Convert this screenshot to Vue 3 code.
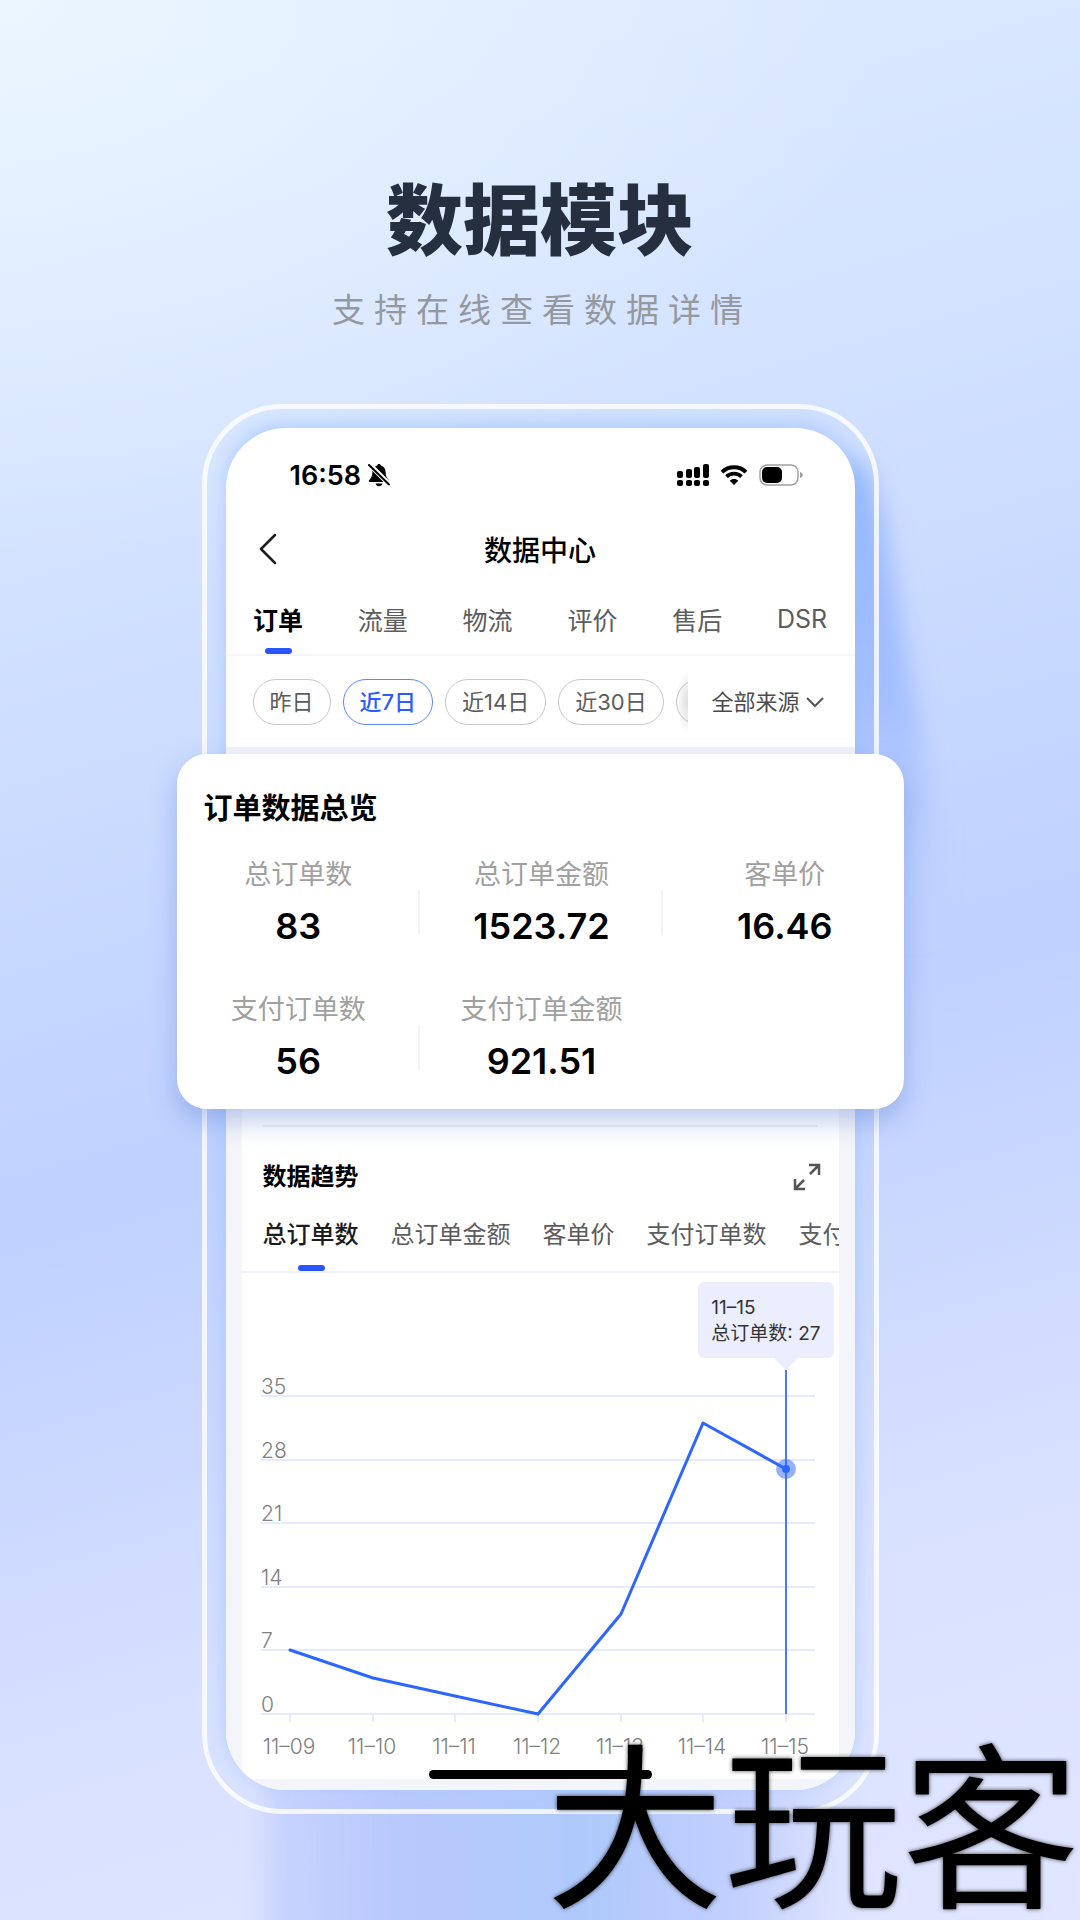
<script setup>
import { ref, computed } from 'vue'

const mainTabs = ['订单', '流量', '物流', '评价', '售后', 'DSR']
const mainTab = ref('订单')

const ranges = ['昨日', '近7日', '近14日', '近30日', '']
const range = ref('近7日')

const sources = ['全部来源']
const source = ref('全部来源')

const stats = [
  { label: '总订单数', value: '83', divider: true },
  { label: '总订单金额', value: '1523.72', divider: true },
  { label: '客单价', value: '16.46', divider: false },
  { label: '支付订单数', value: '56', divider: true },
  { label: '支付订单金额', value: '921.51', divider: false },
]

const trendTabs = ['总订单数', '总订单金额', '客单价', '支付订单数', '支付订单金额']
const trendTab = ref('总订单数')

const series = [
  { date: '11–09', value: 7 },
  { date: '11–10', value: 4 },
  { date: '11–11', value: 2 },
  { date: '11–12', value: 0 },
  { date: '11–13', value: 11 },
  { date: '11–14', value: 32 },
  { date: '11–15', value: 27 },
]
const ticks = [35, 28, 21, 14, 7, 0]
const plot = { left: 48, right: 544, top: 123, bottom: 441, max: 35 }

const yOf = (v) => Math.round(plot.bottom - (v / plot.max) * (plot.bottom - plot.top))
const points = computed(() =>
  series.map((d, i) => ({
    ...d,
    x: Math.round(plot.left + (i * (plot.right - plot.left)) / (series.length - 1)),
    y: yOf(d.value),
  })),
)
const linePoints = computed(() => points.value.map((p) => `${p.x},${p.y}`).join(' '))
const active = computed(() => points.value[points.value.length - 1])
</script>

<template>
  <main class="stage">
    <header class="hero">
      <h1>数据模块</h1>
      <p>支持在线查看数据详情</p>
    </header>

    <div class="device-wrap">
      <svg class="cast" viewBox="0 0 900 1560" preserveAspectRatio="none" aria-hidden="true">
        <defs>
          <linearGradient id="castSide" x1="0" y1="0" x2="0" y2="1">
            <stop offset="0" stop-color="#8fb2ff" stop-opacity=".9" />
            <stop offset=".5" stop-color="#9cb9ff" stop-opacity=".8" />
            <stop offset="1" stop-color="#b4c8ff" stop-opacity="0" />
          </linearGradient>
          <linearGradient id="castFoot" x1="0" y1="0" x2="1" y2="0">
            <stop offset="0" stop-color="#bccafd" stop-opacity=".6" />
            <stop offset=".2" stop-color="#b9c9fd" />
            <stop offset=".55" stop-color="#afc9fc" />
            <stop offset=".8" stop-color="#bccbfe" stop-opacity=".8" />
            <stop offset="1" stop-color="#ccd7fe" stop-opacity="0" />
          </linearGradient>
          <filter id="castBlur" x="-20%" y="-20%" width="140%" height="140%">
            <feGaussianBlur stdDeviation="12" />
          </filter>
        </defs>
        <polygon points="560,60 664,60 680,110 736,430 736,540 560,540" fill="url(#castSide)" filter="url(#castBlur)" />
        <rect x="64" y="1370" width="600" height="240" fill="url(#castFoot)" filter="url(#castBlur)" />
      </svg>

      <section class="device">
        <div class="screen">
          <div class="status">
            <span class="clock">16:58</span>
            <svg class="bell" width="22" height="24" viewBox="0 0 22 24" aria-hidden="true">
              <path d="M11 1c-1 0-1.700.7-1.800 1.500C6.200 3.300 4.500 5.800 4.400 9c-.1 4.200-1.200 6-3.300 8.200-.7.800-.2 1.800.8 1.800h18.200c1 0 1.500-1 .8-1.800-2.100-2.200-3.200-4-3.300-8.200-.1-3.200-1.800-5.700-4.800-6.500C12.700 1.700 12 1 11 1z" />
              <path d="M7.600 20.500h6.800c-.3 1.700-1.700 2.700-3.400 2.700s-3.100-1-3.400-2.700z" />
              <path d="M1 1l20 20" stroke="#fff" stroke-width="5" />
              <path d="M1 2l20 19.500" stroke="#000" stroke-width="2" stroke-linecap="round" />
            </svg>
            <span class="spacer"></span>
            <svg width="32" height="24" viewBox="0 0 32 24" aria-hidden="true">
              <rect x="0" y="8" width="6" height="7" rx="2" />
              <rect x="9" y="6" width="6" height="9" rx="2" />
              <rect x="17" y="4" width="6" height="11" rx="2" />
              <rect x="26" y="1" width="6" height="14" rx="2" />
              <rect x="0" y="17" width="6" height="6" rx="2" />
              <rect x="9" y="17" width="6" height="6" rx="2" />
              <rect x="17" y="17" width="6" height="6" rx="2" />
              <rect x="26" y="17" width="6" height="6" rx="2" />
            </svg>
            <svg class="wifi" width="28" height="20" viewBox="0 0 28 20" aria-hidden="true">
              <path d="M2 7.200C8.500.7 19.500.7 26 7.200" fill="none" stroke="#000" stroke-width="4" />
              <path d="M6.500 11.600c4-4 11-4 15 0" fill="none" stroke="#000" stroke-width="3.800" />
              <path d="M14 20l-4.300-4.300c2.400-2.200 6.200-2.200 8.600 0z" />
            </svg>
            <svg class="battery" width="44" height="22" viewBox="0 0 44 22" aria-hidden="true">
              <rect x="1" y="1" width="38" height="20" rx="7" fill="#fff" stroke="#a0a0a0" stroke-width="1.500" />
              <rect x="3" y="3" width="20" height="16" rx="5" />
              <path d="M41 8c2 .4 2.700 1.700 2.700 3s-.7 2.600-2.700 3z" fill="#a0a0a0" />
            </svg>
          </div>

          <div class="titlebar">
            <button class="back" type="button" aria-label="返回">
              <svg width="20" height="32" viewBox="0 0 20 32" aria-hidden="true">
                <path d="M17 2L3 16l14 14" fill="none" stroke="#1c1c1e" stroke-width="2.500" stroke-linecap="round" stroke-linejoin="round" />
              </svg>
            </button>
            <h2>数据中心</h2>
          </div>

          <nav class="main-tabs">
            <button
              v-for="t in mainTabs"
              :key="t"
              type="button"
              :class="{ on: t === mainTab }"
              @click="mainTab = t"
            >{{ t }}</button>
          </nav>

          <div class="filters">
            <div class="chips">
              <button
                v-for="r in ranges"
                :key="r"
                type="button"
                :class="{ on: r === range }"
                @click="range = r"
              >{{ r }}</button>
            </div>
            <label class="source">
              <select v-model="source" aria-label="来源">
                <option v-for="s in sources" :key="s">{{ s }}</option>
              </select>
              <svg width="18" height="12" viewBox="0 0 18 12" aria-hidden="true">
                <path d="M1 2l8 8 8-8" fill="none" stroke="#555" stroke-width="2" />
              </svg>
            </label>
          </div>

          <section class="overview">
            <h3>订单数据总览</h3>
            <dl>
              <div v-for="s in stats" :key="s.label" :class="{ divided: s.divider }">
                <dt>{{ s.label }}</dt>
                <dd>{{ s.value }}</dd>
              </div>
            </dl>
          </section>

          <div class="lower">
            <section class="trend">
              <hr />
              <div class="trend-head">
                <h3>数据趋势</h3>
                <button type="button" aria-label="全屏">
                  <svg width="28" height="28" viewBox="0 0 28 28" fill="none" stroke="#555" stroke-width="2.500" aria-hidden="true">
                    <path d="M16 2h10v10M26 2l-9 9" />
                    <path d="M2 16v10h10M2 26l9-9" />
                  </svg>
                </button>
              </div>
              <nav class="trend-tabs">
                <button
                  v-for="t in trendTabs"
                  :key="t"
                  type="button"
                  :class="{ on: t === trendTab }"
                  @click="trendTab = t"
                >{{ t }}</button>
              </nav>
              <figure class="chart">
                <svg viewBox="0 0 597 497" role="img" aria-label="总订单数趋势">
                  <g v-for="t in ticks" :key="t">
                    <line class="grid" x1="19" x2="573" :y1="yOf(t)" :y2="yOf(t)" />
                    <text class="axis" x="19" :y="yOf(t) - 2">{{ t }}</text>
                  </g>
                  <g v-for="p in points" :key="p.date">
                    <line class="grid" :x1="p.x" :x2="p.x" y1="441" y2="449" />
                    <text class="axis" :x="p.x - 1" y="481" text-anchor="middle">{{ p.date }}</text>
                  </g>
                  <line class="cursor" :x1="active.x" :x2="active.x" y1="97" y2="441" />
                  <polyline class="line" :points="linePoints" />
                  <circle class="halo" :cx="active.x" :cy="active.y" r="10" />
                  <circle class="dot" :cx="active.x" :cy="active.y" r="4" />
                </svg>
                <figcaption class="tip">
                  <span>{{ active.date }}</span>
                  <span>{{ trendTab }}: {{ active.value }}</span>
                </figcaption>
              </figure>
              <div class="home-bar"></div>
            </section>
          </div>
        </div>
      </section>
    </div>

    <div class="watermark">大玩客</div>
  </main>
</template>

<style>
body {
  margin: 0;
}
</style>

<style scoped>
* {
  box-sizing: border-box;
}

.stage {
  position: relative;
  overflow: hidden;
  min-height: 100vh;
  padding: 169px 0 107px;
  font-family: Inter, "Noto Sans CJK SC", sans-serif;
  color: #000;
  background:
    radial-gradient(ellipse 900px 560px at 0 0, rgba(240, 249, 255, 0.75), rgba(240, 249, 255, 0) 100%),
    linear-gradient(164deg, #dfecff 0%, #d5e4ff 22%, #cbdbff 38%, #bed1ff 55%, #cbd8ff 67%, #dae2ff 82%, #e1e6ff 100%);
}

h1,
h2,
h3,
p,
dl,
dd,
figure {
  margin: 0;
}

button {
  padding: 0;
  border: 0;
  background: none;
  font: inherit;
  color: inherit;
  white-space: nowrap;
}

svg {
  display: block;
}

.hero {
  text-align: center;
}

.hero h1 {
  font-size: 77px;
  line-height: 104px;
  font-weight: 900;
  color: #262f40;
}

.hero p {
  margin: 13px 0 0 4px;
  font-size: 33px;
  line-height: 48px;
  letter-spacing: 9px;
  color: #95989f;
}

.device-wrap {
  position: relative;
  width: 100%;
  max-width: 677px;
  margin: 70px auto 0;
}

.cast {
  position: absolute;
  top: 0;
  left: 0;
  width: 900px;
  height: 1560px;
}

.device {
  position: relative;
  padding: 19px;
  border: 5px solid rgba(255, 255, 255, 0.8);
  border-radius: 80px;
}

.screen {
  border-radius: 60px;
  background: #fff;
  box-shadow: 0 -4px 18px rgba(150, 190, 255, 0.6);
}

.status {
  display: flex;
  align-items: center;
  height: 94px;
  padding: 0 52px 0 64px;
}

.clock {
  font-size: 27px;
  font-weight: 600;
}

.bell {
  margin-left: 7px;
}

.spacer {
  flex: 1;
}

.wifi {
  margin: 0 11px;
}

.titlebar {
  position: relative;
  display: flex;
  align-items: center;
  justify-content: center;
  height: 54px;
}

.titlebar h2 {
  font-size: 28px;
  font-weight: 500;
}

.back {
  position: absolute;
  left: 32px;
}

.main-tabs {
  display: flex;
  height: 80px;
  border-bottom: 2px solid #f6f6f8;
}

.main-tabs button {
  position: relative;
  flex: 1;
  padding-bottom: 8px;
  padding-top: 16px;
  font-size: 25px;
  color: #5c5c5c;
}

.main-tabs button.on {
  font-weight: 600;
  color: #000;
}

.main-tabs button.on::after,
.trend-tabs button.on::after {
  content: "";
  position: absolute;
  left: calc(50% - 13px);
  bottom: 0;
  width: 27px;
  height: 6px;
  border-radius: 3px;
  background: #2b54ff;
}

.filters {
  display: flex;
  height: 98px;
  border-bottom: 7px solid #f3f4fa;
}

.chips {
  position: relative;
  flex: 1;
  min-width: 0;
  display: flex;
  align-items: center;
  gap: 12px;
  padding-left: 27px;
  overflow: hidden;
}

.chips::after {
  content: "";
  position: absolute;
  right: 0;
  top: 14px;
  width: 12px;
  height: 64px;
  background: radial-gradient(ellipse 12px 32px at 100% 50%, rgba(0, 0, 0, 0.13), rgba(0, 0, 0, 0));
}

.chips button {
  flex: none;
  min-width: 78px;
  height: 46px;
  padding: 0 16px 4px;
  border: 1px solid #c8c8c8;
  border-radius: 23px;
  font-size: 22px;
  color: #5c5c5c;
}

.chips button.on {
  border-color: #5a86ff;
  font-weight: 500;
  color: #2b5cff;
}

.source {
  position: relative;
  display: flex;
  align-items: center;
  width: 167px;
  padding-left: 24px;
}

.source select {
  appearance: none;
  width: 112px;
  padding: 0;
  border: 0;
  background: none;
  font: inherit;
  font-size: 22px;
  color: #4c4c4c;
}

.source svg {
  position: absolute;
  left: 118px;
}

.overview {
  position: relative;
  z-index: 1;
  margin: 0 -49px;
  height: 355px;
  padding-top: 33px;
  border-radius: 30px;
  background: #fff;
  box-shadow: 0 12px 26px rgba(90, 125, 205, 0.4);
}

.overview h3 {
  padding-left: 27px;
  font-size: 29px;
  line-height: 44px;
  font-weight: 600;
}

.overview dl {
  display: grid;
  grid-template-columns: repeat(3, 1fr);
  row-gap: 42px;
  margin: 24px -3px 0 0;
}

.overview dl div {
  position: relative;
  text-align: center;
}

.overview dl .divided::after {
  content: "";
  position: absolute;
  right: 0;
  top: 35px;
  width: 2px;
  height: 45px;
  background: #f1f1f8;
}

.overview dt {
  font-size: 27px;
  line-height: 40px;
  color: #a0a0a0;
}

.overview dd {
  margin-top: 9px;
  font-size: 36px;
  line-height: 44px;
  font-weight: 600;
}

.lower {
  overflow: hidden;
  padding: 0 16px 11px;
  border-radius: 0 0 60px 60px;
  background: #f4f5fa;
}

.trend {
  background: #fff;
}

.trend hr {
  margin: 0 21px;
  padding-top: 16px;
  border: 0;
  border-bottom: 2px solid #edeff6;
}

.trend-head {
  display: flex;
  align-items: center;
  justify-content: space-between;
  padding: 0 18px 0 21px;
  margin-top: 30px;
}

.trend-head h3 {
  font-size: 24px;
  line-height: 40px;
  font-weight: 600;
}

.trend-tabs {
  display: flex;
  gap: 32px;
  height: 76px;
  padding: 0 21px;
  overflow: hidden;
  border-bottom: 2px solid #f0f1f9;
}

.trend-tabs button {
  position: relative;
  flex: none;
  padding: 8px 0 12px;
  font-size: 24px;
  color: #5c5c5c;
}

.trend-tabs button.on {
  font-weight: 500;
  color: #1c1c1e;
}

.chart {
  position: relative;
}

.chart svg {
  width: 100%;
  height: auto;
}

.grid {
  stroke: #e4eaff;
  stroke-width: 2;
}

.axis {
  font-size: 21px;
  font-weight: 300;
  fill: #808080;
}

.cursor {
  stroke: #4a78ff;
  stroke-width: 2;
}

.line {
  fill: none;
  stroke: #2d66ff;
  stroke-width: 3;
  stroke-linejoin: round;
  stroke-linecap: round;
}

.halo {
  fill: #2d66ff;
  opacity: 0.5;
}

.dot {
  fill: #2d66ff;
}

.tip {
  position: absolute;
  right: 5px;
  top: 9px;
  padding: 13px 13px 11px;
  border-radius: 6px;
  background: #ebeeff;
  font-size: 19px;
  line-height: 26px;
  color: #333;
}

.tip span {
  display: block;
  white-space: nowrap;
}

.tip::after {
  content: "";
  position: absolute;
  right: 36px;
  top: 100%;
  border: 12px solid transparent;
  border-top-color: #ebeeff;
  border-bottom: 0;
}

.home-bar {
  width: 223px;
  height: 9px;
  margin: 0 auto;
  border-radius: 5px;
  background: #000;
}

.watermark {
  position: absolute;
  right: 0;
  bottom: 0;
  font-size: 178px;
  line-height: 180px;
  font-weight: 400;
  white-space: nowrap;
  text-shadow: 0 0 4px rgba(0, 0, 0, 0.7);
}
</style>
